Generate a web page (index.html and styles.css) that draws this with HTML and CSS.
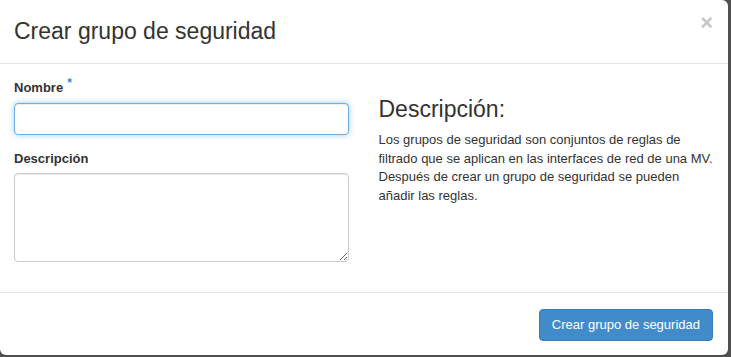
FILE: index.html
```html
<!DOCTYPE html>
<html lang="es">
<head>
    <meta charset="UTF-8">
    <meta name="viewport" content="width=device-width, initial-scale=1.0">
    <title>Crear grupo de seguridad</title>
    <link rel="stylesheet" href="styles.css">
</head>
<body>
    <div class="modal">
        <div class="modal-header">
            <h3 class="modal-title">Crear grupo de seguridad</h3>
            <button type="button" class="close">&times;</button>
        </div>
        <form class="modal-body" action="#" method="post">
            <div class="col">
                <div class="form-group">
                    <label for="name">Nombre<span class="required">*</span></label>
                    <input type="text" id="name" name="name" class="form-control focused">
                </div>
                <div class="form-group">
                    <label for="description">Descripción</label>
                    <textarea id="description" name="description" rows="4" class="form-control"></textarea>
                </div>
            </div>
            <div class="col">
                <h3 class="help-title">Descripción:</h3>
                <p class="help-text">Los grupos de seguridad son conjuntos de reglas de filtrado que se aplican en las interfaces de red de una MV. Después de crear un grupo de seguridad se pueden añadir las reglas.</p>
            </div>
        </form>
        <div class="modal-footer">
            <button type="submit" class="btn-primary">Crear grupo de seguridad</button>
        </div>
    </div>
</body>
</html>
```

FILE: styles.css
```css
* {
    box-sizing: border-box;
}

body {
    margin: 0;
    padding: 0;
    height: 100vh;
    background-color: #505050;
    font-family: "Liberation Sans", Arial, sans-serif;
    font-size: 13px;
    line-height: 1.428571;
    color: #333;
}

.modal {
    width: 728px;
    height: 355px;
    background-color: #fff;
    border-radius: 0 6px 6px 6px;
    display: flex;
    flex-direction: column;
}

.modal-header {
    display: flex;
    align-items: flex-start;
    padding: 15px 15px 15px 14px;
    border-bottom: 1px solid #e5e5e5;
}

.modal-title {
    flex: 1;
    margin: 0;
    font-size: 23px;
    font-weight: normal;
    line-height: 33px;
}

.close {
    padding: 0;
    margin: -3px 0 0 0;
    border: none;
    background: none;
    font-family: "Liberation Sans", Arial, sans-serif;
    font-size: 22px;
    font-weight: bold;
    line-height: 1;
    color: #c6c6c6;
    text-shadow: 0 1px 0 #fff;
    cursor: pointer;
}

.modal-body {
    display: flex;
    gap: 30px;
    margin: 0;
    padding: 15px 15px 0 14px;
    flex: 1;
}

.col {
    flex: 1;
}

.form-group {
    margin-bottom: 15px;
}

.form-group label {
    display: block;
    margin-bottom: 5px;
    font-weight: bold;
}

.required {
    color: #428bca;
    font-size: 12px;
    vertical-align: top;
    position: relative;
    top: -4px;
    margin-left: 4px;
}

.form-control {
    display: block;
    width: 100%;
    padding: 6px 12px;
    font-family: inherit;
    font-size: 13px;
    line-height: 1.428571;
    color: #555;
    border: 1px solid #ccc;
    border-radius: 4px;
    box-shadow: inset 0 1px 1px rgba(0, 0, 0, 0.075);
}

.focused {
    height: 32px;
    border-color: #66afe9;
    box-shadow: inset 0 1px 1px rgba(0, 0, 0, 0.075), 0 0 6px rgba(102, 175, 233, 0.6);
}

textarea.form-control {
    height: 89px;
    resize: vertical;
}

.help-title {
    margin: 18px 0 9px 0;
    font-size: 23px;
    font-weight: normal;
    line-height: 1.1;
}

.help-text {
    margin: 0;
}

.modal-footer {
    display: flex;
    justify-content: flex-end;
    padding: 16px 15px 14px 15px;
    border-top: 1px solid #e5e5e5;
}

.btn-primary {
    height: 32px;
    padding: 6px 12px;
    font-family: inherit;
    font-size: 13px;
    line-height: 1.428571;
    color: #fff;
    background-color: #428bca;
    border: 1px solid #357ebd;
    border-radius: 4px;
    cursor: pointer;
}
```
